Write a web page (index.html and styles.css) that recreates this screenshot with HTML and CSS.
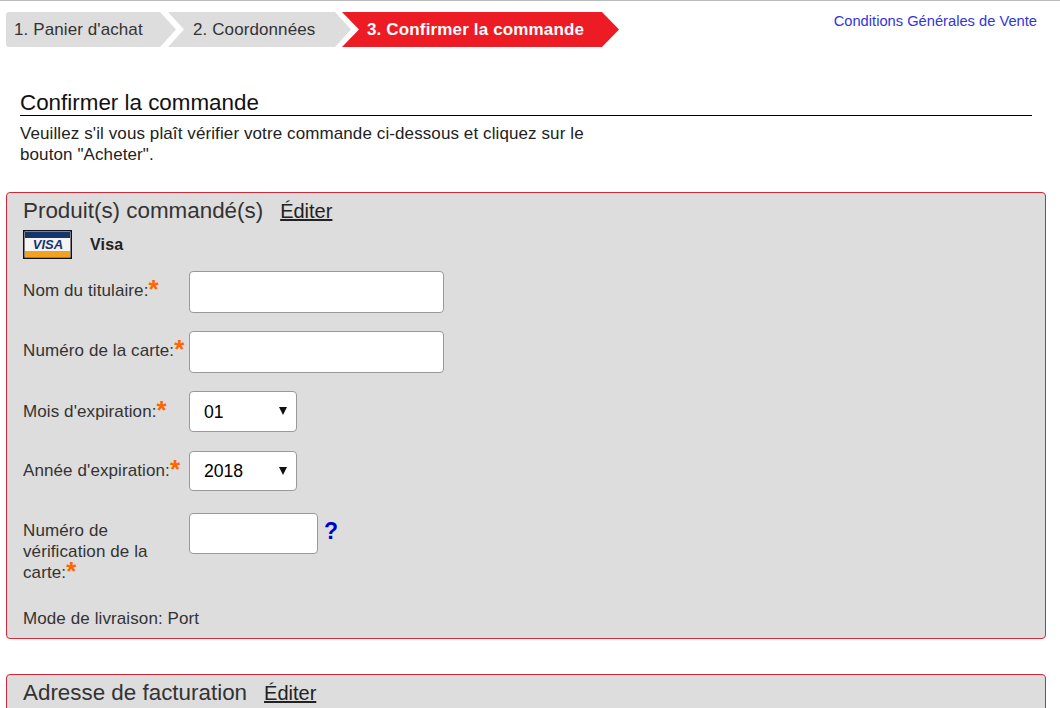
FILE: index.html
```html
<!DOCTYPE html>
<html lang="fr">
<head>
  <meta charset="UTF-8" />
  <meta name="viewport" content="width=device-width, initial-scale=1.0"/>
  <title>Confirmer la commande</title>
  <link rel="stylesheet" href="styles.css">
</head>
<body>
  <div class="top-bar">
    <div class="steps">
      <div class="step step-first">1. Panier d'achat</div>
      <div class="step step-second">2. Coordonnées</div>
      <div class="step step-active">3. Confirmer la commande</div>
    </div>
    <a class="terms" href="#">Conditions Générales de Vente</a>
  </div>

  <div class="intro">
    <h1>Confirmer la commande</h1>
    <p>Veuillez s'il vous plaît vérifier votre commande ci-dessous et cliquez sur le bouton "Acheter".</p>
  </div>

  <div class="panel">
    <div class="panel-title"><h2>Produit(s) commandé(s)</h2><a href="#">Éditer</a></div>
    <div class="card-type">
      <svg class="visa" width="49" height="29" viewBox="0 0 49 29">
        <rect x="0.75" y="0.75" width="47.5" height="27.5" fill="#f4f4f4" stroke="#111" stroke-width="1.5"/>
        <rect x="2" y="2" width="45" height="6" fill="#14336f"/>
        <rect x="2" y="21" width="45" height="6" fill="#f3a21f"/>
        <text x="25" y="19" text-anchor="middle" class="visa-text">VISA</text>
      </svg>
      <b>Visa</b>
    </div>

    <div class="row row-text row-first">
      <label>Nom du titulaire:<span class="req">*</span></label>
      <input type="text" class="input-long">
    </div>
    <div class="row row-text">
      <label>Numéro de la carte:<span class="req">*</span></label>
      <input type="text" class="input-long">
    </div>
    <div class="row row-month">
      <label>Mois d'expiration:<span class="req">*</span></label>
      <div class="select-wrap"><select><option>01</option></select></div>
    </div>
    <div class="row row-year">
      <label>Année d'expiration:<span class="req">*</span></label>
      <div class="select-wrap"><select class="select-short"><option>2018</option></select></div>
    </div>
    <div class="row row-cvv">
      <label>Numéro de vérification de la carte:<span class="req">*</span></label>
      <input type="text" class="input-short">
      <a class="help" href="#">?</a>
    </div>
    <div class="shipping">Mode de livraison: Port</div>
  </div>

  <div class="panel panel-next">
    <div class="panel-title"><h2>Adresse de facturation</h2><a href="#">Éditer</a></div>
  </div>
</body>
</html>
```

FILE: styles.css
```css
html, body {
  margin: 0;
  padding: 0;
  height: 100%;
  overflow: hidden;
}

body {
  font-family: "Liberation Sans", Arial, sans-serif;
  font-size: 17px;
  letter-spacing: 0.1px;
  color: #333;
  background: #fff;
  border-top: 1px solid #bbb;
  box-sizing: border-box;
}

.top-bar {
  display: flex;
  justify-content: space-between;
  padding: 11px 23px 0 6px;
}

.steps {
  display: flex;
}

.step {
  height: 35px;
  line-height: 35px;
  background: #ddd;
  box-sizing: border-box;
}

.step-first {
  width: 170px;
  padding-left: 8px;
  border-radius: 3px 0 0 3px;
  clip-path: polygon(0 0, 154px 0, 100% 50%, 154px 100%, 0 100%);
}

.step-second {
  width: 183px;
  margin-left: -8px;
  padding-left: 25px;
  clip-path: polygon(0 0, 167px 0, 100% 50%, 167px 100%, 0 100%, 16px 50%);
}

.step-active {
  width: 277px;
  margin-left: -9px;
  padding-left: 25px;
  background: #ed1c24;
  color: #fff;
  font-weight: bold;
  letter-spacing: 0.15px;
  clip-path: polygon(0 0, 260px 0, 100% 50%, 260px 100%, 0 100%, 17px 50%);
}

.terms {
  font-size: 14.7px;
  letter-spacing: 0;
  color: #3333dd;
  text-decoration: none;
  line-height: 18px;
}

.intro {
  margin: 43px 28px 0 20px;
}

.intro h1 {
  margin: 0;
  font-size: 22.4px;
  font-weight: normal;
  letter-spacing: 0;
  line-height: 25px;
  color: #111;
  border-bottom: 1px solid #000;
}

.intro p {
  margin: 7px 0 0;
  width: 600px;
  line-height: 21px;
  color: #222;
}

.panel {
  margin: 27px 14px 0 6px;
  padding: 5px 16px 0;
  height: 447px;
  box-sizing: border-box;
  background: #ddd;
  border: 1px solid #d2283a;
  border-radius: 4px;
}

.panel-next {
  margin-top: 35px;
}

.panel-title {
  display: flex;
  align-items: baseline;
  gap: 17px;
}

.panel-title h2 {
  margin: 0;
  font-size: 22.4px;
  font-weight: normal;
  letter-spacing: 0;
  line-height: 26px;
}

.panel-title a {
  font-size: 20px;
  letter-spacing: 0;
  color: #222;
}

.card-type {
  display: flex;
  align-items: center;
  gap: 18px;
  height: 29px;
  margin-top: 6px;
}

.card-type b {
  font-size: 16px;
  letter-spacing: 0.2px;
  color: #222;
}

.visa-text {
  font-family: "Liberation Sans", Arial, sans-serif;
  font-size: 13px;
  font-weight: bold;
  font-style: italic;
  letter-spacing: 0;
  fill: #14336f;
}

.row {
  display: flex;
  align-items: flex-start;
}

.row label {
  width: 166px;
  flex: none;
  line-height: 21px;
}

.req {
  color: #ff6600;
  font-size: 26px;
  line-height: 16px;
  font-weight: bold;
  letter-spacing: 0;
  vertical-align: -2px;
}

.row-text {
  height: 60px;
}

.row-first {
  margin-top: 12px;
}

.row-text label {
  padding-top: 9px;
}

.row-month {
  height: 60px;
}

.row-month label {
  padding-top: 10px;
}

.row-year {
  height: 62px;
}

.row-year label {
  padding-top: 9px;
}

.row-cvv {
  height: 96px;
}

.row-cvv label {
  padding-top: 7px;
  width: 130px;
  margin-right: 36px;
}

input,
select {
  background: #fff;
  border: 1px solid #999;
  border-radius: 4px;
  box-sizing: border-box;
  font-family: inherit;
  font-size: 17.6px;
  color: #000;
}

.input-long {
  width: 255px;
  height: 42px;
}

.input-short {
  width: 129px;
  height: 41px;
}

.help {
  margin: 5px 0 0 6px;
  font-size: 23px;
  font-weight: bold;
  letter-spacing: 0;
  color: #0000cc;
  text-decoration: none;
}

.select-wrap {
  position: relative;
  width: 108px;
}

.select-wrap::after {
  content: "";
  position: absolute;
  right: 10px;
  top: 16px;
  border-left: 4px solid transparent;
  border-right: 4px solid transparent;
  border-top: 8px solid #111;
}

select {
  appearance: none;
  width: 108px;
  height: 41px;
  padding-left: 14px;
  display: block;
}

.select-short {
  height: 40px;
}

.shipping {
  line-height: 20px;
}
```
